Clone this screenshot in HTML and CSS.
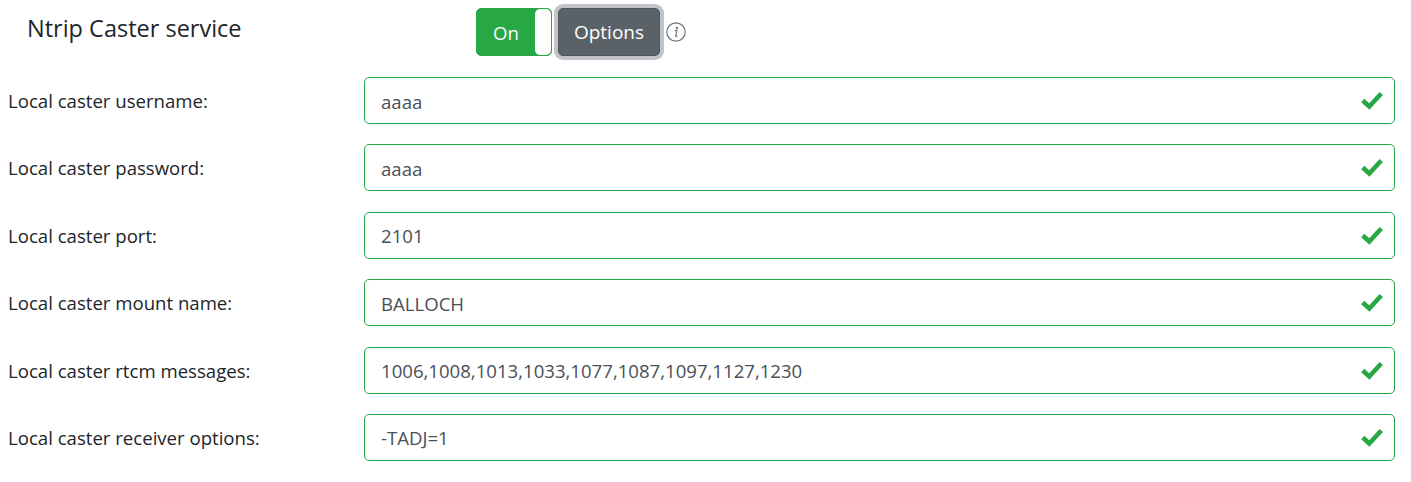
FILE: index.html
```html
<!DOCTYPE html>
<html lang="en">
<head>
    <meta charset="UTF-8">
    <title>Ntrip Caster service</title>
    <link rel="stylesheet" href="styles.css">
</head>
<body>
    <div class="service-header">
        <h5 class="service-title">Ntrip Caster service</h5>
        <div class="toggle">
            <span class="toggle-label">On</span>
            <span class="toggle-handle"></span>
        </div>
        <button class="btn-options">Options</button>
        <svg class="info-icon" width="20" height="20" viewBox="0 0 20 20">
            <circle cx="10" cy="10" r="9.2" fill="none" stroke="#6c757d" stroke-width="1.2"/>
            <circle cx="10.9" cy="5.9" r="1.2" fill="#6c757d"/>
            <path d="M8.6 8.6 L11 8.3 L9.7 13.6 Q9.5 14.6 10.4 14.3 L11.4 13.7" fill="none" stroke="#6c757d" stroke-width="1.1"/>
        </svg>
    </div>

    <div class="form-row">
        <label class="form-label">Local caster username:</label>
        <div class="field"><span class="field-text">aaaa</span><svg class="check" viewBox="0 0 22 18" width="24" height="20"><path d="M2.5 9.5 L8.5 15 L19.5 3" fill="none" stroke="#28a745" stroke-width="4.2"/></svg></div>
    </div>
    <div class="form-row">
        <label class="form-label">Local caster password:</label>
        <div class="field"><span class="field-text">aaaa</span><svg class="check" viewBox="0 0 22 18" width="24" height="20"><path d="M2.5 9.5 L8.5 15 L19.5 3" fill="none" stroke="#28a745" stroke-width="4.2"/></svg></div>
    </div>
    <div class="form-row">
        <label class="form-label">Local caster port:</label>
        <div class="field"><span class="field-text">2101</span><svg class="check" viewBox="0 0 22 18" width="24" height="20"><path d="M2.5 9.5 L8.5 15 L19.5 3" fill="none" stroke="#28a745" stroke-width="4.2"/></svg></div>
    </div>
    <div class="form-row">
        <label class="form-label">Local caster mount name:</label>
        <div class="field"><span class="field-text">BALLOCH</span><svg class="check" viewBox="0 0 22 18" width="24" height="20"><path d="M2.5 9.5 L8.5 15 L19.5 3" fill="none" stroke="#28a745" stroke-width="4.2"/></svg></div>
    </div>
    <div class="form-row">
        <label class="form-label">Local caster rtcm messages:</label>
        <div class="field"><span class="field-text">1006,1008,1013,1033,1077,1087,1097,1127,1230</span><svg class="check" viewBox="0 0 22 18" width="24" height="20"><path d="M2.5 9.5 L8.5 15 L19.5 3" fill="none" stroke="#28a745" stroke-width="4.2"/></svg></div>
    </div>
    <div class="form-row">
        <label class="form-label">Local caster receiver options:</label>
        <div class="field"><span class="field-text">-TADJ=1</span><svg class="check" viewBox="0 0 22 18" width="24" height="20"><path d="M2.5 9.5 L8.5 15 L19.5 3" fill="none" stroke="#28a745" stroke-width="4.2"/></svg></div>
    </div>
</body>
</html>
```

FILE: styles.css
```css
body {
    font-family: "Open Sans", "Noto Sans", sans-serif;
    font-size: 18.6px;
    color: #212529;
    background-color: #fff;
    margin: 0;
    padding: 8px 16px 0 8px;
}

.service-header {
    display: flex;
    align-items: center;
    height: 48px;
    margin-bottom: 21px;
}

.service-title {
    width: 449px;
    margin: 0 0 8px 19px;
    font-size: 23.5px;
    font-weight: 400;
}

.toggle {
    display: flex;
    justify-content: space-between;
    width: 76px;
    height: 48px;
    background-color: #28a745;
    border: 1px solid #28a745;
    border-radius: 5px;
    box-sizing: border-box;
}

.toggle-label {
    color: #fff;
    padding-left: 16px;
    line-height: 48px;
}

.toggle-handle {
    width: 16px;
    background-color: #fff;
    border-radius: 5px;
}

.btn-options {
    width: 102px;
    height: 48px;
    margin-left: 6px;
    background-color: #5a6268;
    color: #fff;
    font-family: inherit;
    font-size: 19px;
    border: 1px solid #4e555b;
    border-radius: 5px;
    box-shadow: 0 0 0 4px rgba(130, 138, 145, .5);
}

.info-icon {
    margin-left: 6px;
}

.form-row {
    display: flex;
    align-items: center;
    height: 47px;
    margin-bottom: 20.4px;
}

.form-label {
    width: 356px;
}

.field {
    flex: 1;
    height: 47px;
    display: flex;
    align-items: center;
    justify-content: space-between;
    padding: 1px 10px 0 16px;
    border: 1px solid #28a745;
    border-radius: 5px;
    box-sizing: border-box;
    color: #495057;
}

.check {
    display: block;
    margin-top: -2px;
}
```
